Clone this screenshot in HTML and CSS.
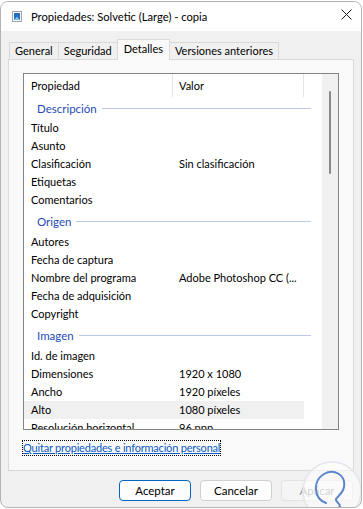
FILE: index.html
```html
<!DOCTYPE html>
<html lang="es">
<head>
    <meta charset="UTF-8">
    <title>Propiedades: Solvetic (Large) - copia</title>
    <link rel="stylesheet" href="styles.css">
</head>
<body>

    <div class="window">
        <div class="titlebar">
            <svg class="file-icon" width="11" height="11" viewBox="0 0 11 11">
                <rect x="0.5" y="0.5" width="9" height="10" fill="#fff" stroke="#9aa3ad"/>
                <rect x="2" y="2" width="6" height="7" fill="#1f6fc5"/>
                <path d="M2 9 L5 5.5 L8 9 Z" fill="#7cc0f0"/>
            </svg>
            <span class="title">Propiedades: Solvetic (Large) - copia</span>
            <svg class="close" width="11" height="11" viewBox="0 0 11 11">
                <path d="M0.5 0.5 L10.5 10.5 M10.5 0.5 L0.5 10.5" stroke="#1a1a1a" stroke-width="1"/>
            </svg>
        </div>

        <div class="body">
            <div class="tabs">
                <div class="tab">General</div>
                <div class="tab">Seguridad</div>
                <div class="tab active">Detalles</div>
                <div class="tab">Versiones anteriores</div>
            </div>

            <div class="panel">
                <div class="list">
                    <div class="rows">
                        <div class="row head">
                            <div class="cell prop">Propiedad</div>
                            <div class="cell val">Valor</div>
                        </div>

                        <div class="group first"><span>Descripción</span><i></i></div>
                        <div class="row"><div class="cell prop">Título</div><div class="cell val"></div></div>
                        <div class="row"><div class="cell prop">Asunto</div><div class="cell val"></div></div>
                        <div class="row"><div class="cell prop">Clasificación</div><div class="cell val">Sin clasificación</div></div>
                        <div class="row"><div class="cell prop">Etiquetas</div><div class="cell val"></div></div>
                        <div class="row"><div class="cell prop">Comentarios</div><div class="cell val"></div></div>

                        <div class="group"><span>Origen</span><i></i></div>
                        <div class="row"><div class="cell prop">Autores</div><div class="cell val"></div></div>
                        <div class="row"><div class="cell prop">Fecha de captura</div><div class="cell val"></div></div>
                        <div class="row"><div class="cell prop">Nombre del programa</div><div class="cell val">Adobe Photoshop CC (...</div></div>
                        <div class="row"><div class="cell prop">Fecha de adquisición</div><div class="cell val"></div></div>
                        <div class="row"><div class="cell prop">Copyright</div><div class="cell val"></div></div>

                        <div class="group"><span>Imagen</span><i></i></div>
                        <div class="row"><div class="cell prop">Id. de imagen</div><div class="cell val"></div></div>
                        <div class="row"><div class="cell prop">Dimensiones</div><div class="cell val">1920 x 1080</div></div>
                        <div class="row"><div class="cell prop">Ancho</div><div class="cell val">1920 píxeles</div></div>
                        <div class="row hover"><div class="cell prop">Alto</div><div class="cell val">1080 píxeles</div></div>
                        <div class="row"><div class="cell prop">Resolución horizontal</div><div class="cell val">96 ppp</div></div>
                    </div>
                    <div class="scrollbar"><div class="thumb"></div></div>
                </div>

                <div class="link-row">
                    <a href="#" class="link">Quitar propiedades e información personal</a>
                </div>
            </div>

            <div class="buttons">
                <button type="button" class="btn default">Aceptar</button>
                <button type="button" class="btn">Cancelar</button>
                <button type="button" class="btn" disabled>Aplicar</button>
            </div>
        </div>

        <svg class="watermark" width="64" height="60" viewBox="0 0 64 60">
            <circle cx="32" cy="32" r="29" fill="rgba(255,255,255,0.55)" stroke="#e2e6ec" stroke-width="1.5"/>
            <path d="M26 44 C14 40 12 22 24 15 C34 9 46 16 44 28 C43 34 38 37 36 40 C35 43 40 44 40 47 C40 50 32 50 30 53 C34 53 40 51 39 55"
                  fill="none" stroke="#5b86c9" stroke-width="2" stroke-linecap="round" stroke-linejoin="round"/>
        </svg>
    </div>

</body>
</html>
```

FILE: styles.css
```css
body {
    margin: 0;
    background-color: #ffffff;
    font-family: "Segoe UI", Lato, sans-serif;
    font-size: 11px;
    color: #000;
}
.window {
    position: relative;
    width: 360px;
    height: 505px;
    margin-top: 1px;
    border: 1px solid #b4b4b4;
    border-radius: 8px;
    overflow: hidden;
    background-color: #f0f0f0;
    display: flex;
    flex-direction: column;
}
.titlebar {
    height: 29px;
    background-color: #fff;
    display: flex;
    align-items: center;
    padding-left: 11px;
    flex-shrink: 0;
}
.file-icon {
    margin-right: 8px;
}
.title {
    flex: 1;
    font-size: 11.2px;
    color: #000;
}
.close {
    margin-right: 9px;
    margin-top: -5px;
}
.body {
    flex: 1;
    padding: 8px 7px 0 7px;
    display: flex;
    flex-direction: column;
}
.tabs {
    display: flex;
    align-items: flex-end;
    height: 20px;
    padding-left: 1px;
    position: relative;
    z-index: 1;
}
.tab {
    height: 17px;
    line-height: 16px;
    padding: 0 5px;
    border: 1px solid #d9d9d9;
    border-bottom: none;
    margin-right: -1px;
    background-color: #f0f0f0;
    box-sizing: border-box;
}
.tab.active {
    height: 21px;
    line-height: 18px;
    margin-bottom: -1px;
    padding: 0 6px;
    background-color: #f9f9f9;
    position: relative;
}
.panel {
    height: 412px;
    border: 1px solid #d9d9d9;
    background-color: #f9f9f9;
    box-sizing: border-box;
    padding: 13px 14px 0 14px;
}
.list {
    height: 357px;
    border: 1px solid #848484;
    background-color: #fff;
    display: flex;
    box-sizing: border-box;
}
.rows {
    flex: 1;
    overflow: hidden;
}
.row {
    display: flex;
    height: 18px;
    line-height: 18px;
    width: 280px;
}
.row.head {
    height: 23px;
    line-height: 24px;
}
.row.head .cell {
    border-right: 1px solid #e5e5e5;
}
.row.hover {
    background-color: #f0f0f0;
}
.cell {
    white-space: nowrap;
    overflow: hidden;
    box-sizing: border-box;
}
.prop {
    width: 149px;
    padding-left: 7px;
}
.val {
    width: 131px;
    padding-left: 6px;
}
.group {
    display: flex;
    align-items: center;
    height: 24px;
    padding-left: 13px;
    margin-right: 11px;
    color: #1e4db7;
    font-size: 11.5px;
}
.group.first {
    height: 22px;
}
.group i {
    flex: 1;
    height: 1px;
    margin-left: 5px;
    background-color: #b9c9ea;
}
.scrollbar {
    width: 16px;
    background-color: #f0f0f0;
    position: relative;
}
.thumb {
    position: absolute;
    left: 7px;
    top: 17px;
    width: 2px;
    height: 83px;
    border-radius: 1px;
    background-color: #8a8a8a;
}
.link-row {
    padding-top: 11px;
}
.link {
    color: #0b5bc4;
    text-decoration: underline;
    letter-spacing: -0.2px;
    outline: 1px dotted #000;
    outline-offset: 0;
    padding: 0 0 1px 0;
}
.buttons {
    display: flex;
    justify-content: flex-end;
    gap: 9px;
    padding-top: 9px;
    padding-right: 1px;
}
.btn {
    width: 72px;
    height: 21px;
    font-family: "Segoe UI", Lato, sans-serif;
    font-size: 11.5px;
    color: #000;
    background-color: #fdfdfd;
    border: 1px solid #d0d0d0;
    border-radius: 4px;
    padding: 0;
}
.btn.default {
    border: 1px solid #0067c0;
}
.btn:disabled {
    color: #a0a0a0;
    background-color: #f5f5f5;
    border-color: #e3e3e3;
}
.watermark {
    position: absolute;
    right: -3px;
    bottom: -12px;
}
```
